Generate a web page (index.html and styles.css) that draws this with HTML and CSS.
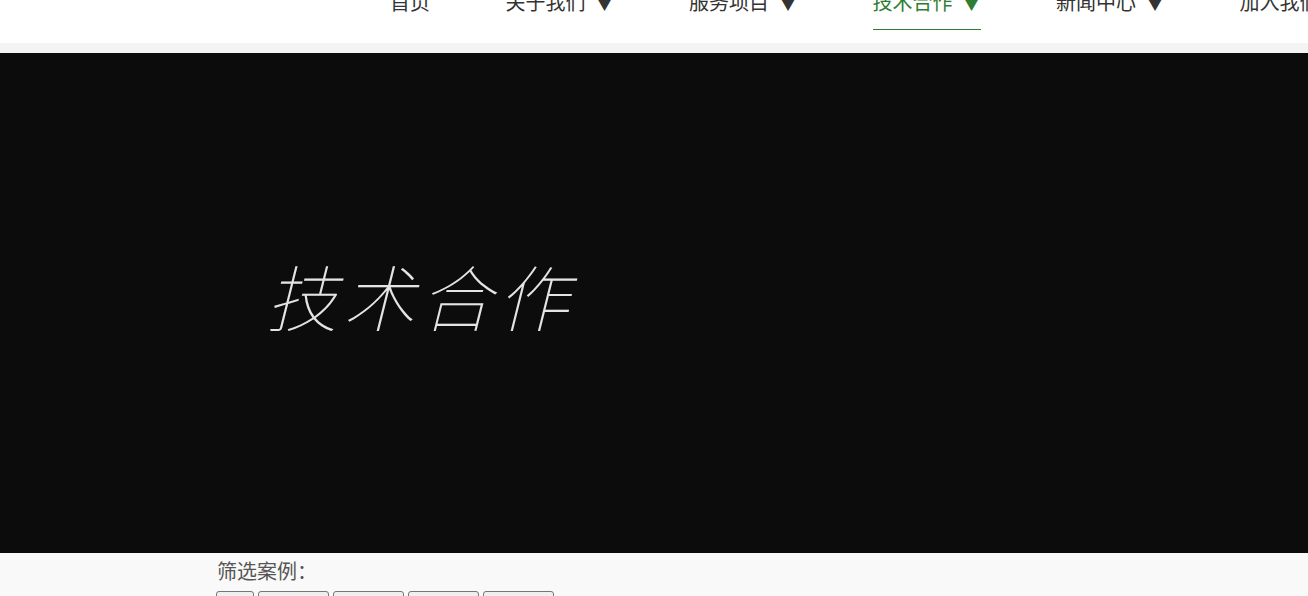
FILE: index.html
```html
<!DOCTYPE html>
<html lang="zh">
<head>
<meta charset="utf-8">
<title>技术合作</title>
<link rel="stylesheet" href="styles.css">
</head>
<body>
<header class="header">
  <nav class="nav">
    <a class="nav-item" href="#">首页</a>
    <a class="nav-item" href="#">关于我们<span class="arrow">▼</span></a>
    <a class="nav-item" href="#">服务项目<span class="arrow">▼</span></a>
    <a class="nav-item active" href="#">技术合作<span class="arrow">▼</span></a>
    <a class="nav-item" href="#">新闻中心<span class="arrow">▼</span></a>
    <a class="nav-item" href="#">加入我们</a>
  </nav>
</header>
<div class="strip"></div>
<section class="hero">
  <h1 class="hero-title">技术合作</h1>
</section>
<section class="filter">
  <div class="filter-label">筛选案例：</div>
  <div class="filter-buttons">
    <button class="btn btn-small">全部</button>
    <button class="btn">合作案例</button>
    <button class="btn">合作案例</button>
    <button class="btn">合作案例</button>
    <button class="btn">合作案例</button>
  </div>
</section>
</body>
</html>
```

FILE: styles.css
```css
html, body {
  margin: 0;
  padding: 0;
  overflow: hidden;
  background: #f9f9f9;
  font-family: "Noto Sans CJK SC", "Noto Sans", sans-serif;
}
.header {
  height: 43px;
  background: #ffffff;
  overflow: hidden;
}
.nav {
  display: flex;
  gap: 75.5px;
  padding-left: 390px;
  margin-top: -8px;
  white-space: nowrap;
}
.nav-item {
  display: flex;
  align-items: flex-start;
  font-size: 20px;
  line-height: 20px;
  color: #333333;
  text-decoration: none;
  padding-bottom: 17px;
  border-bottom: 1px solid transparent;
  flex-shrink: 0;
}
.nav-item.active {
  color: #2e7d32;
  border-bottom-color: #2e7d32;
}
.arrow {
  display: block;
  width: 28px;
  text-align: right;
  font-size: 18px;
  line-height: 20px;
}
.strip {
  height: 10px;
  background: #f4f4f4;
}
.hero {
  height: 500px;
  background: #0c0c0c;
  display: flex;
  align-items: center;
  padding-left: 266px;
}
.hero-title {
  margin: 0;
  margin-top: -18px;
  font-size: 72px;
  font-weight: 100;
  font-style: italic;
  color: #e4e4e4;
  letter-spacing: 5px;
}
.filter {
  padding-left: 217px;
  padding-top: 4px;
}
.filter-label {
  font-size: 20px;
  line-height: 27px;
  color: #555555;
}
.filter-buttons {
  display: flex;
  gap: 4px;
  margin-top: 7px;
  margin-left: -1px;
}
.btn {
  width: 71px;
  height: 30px;
  border: 1px solid #767676;
  border-radius: 3px;
  background: #efefef;
  font-family: "Noto Sans CJK SC", sans-serif;
  font-size: 13px;
  color: #000;
}
.btn-small {
  width: 38px;
}
```
